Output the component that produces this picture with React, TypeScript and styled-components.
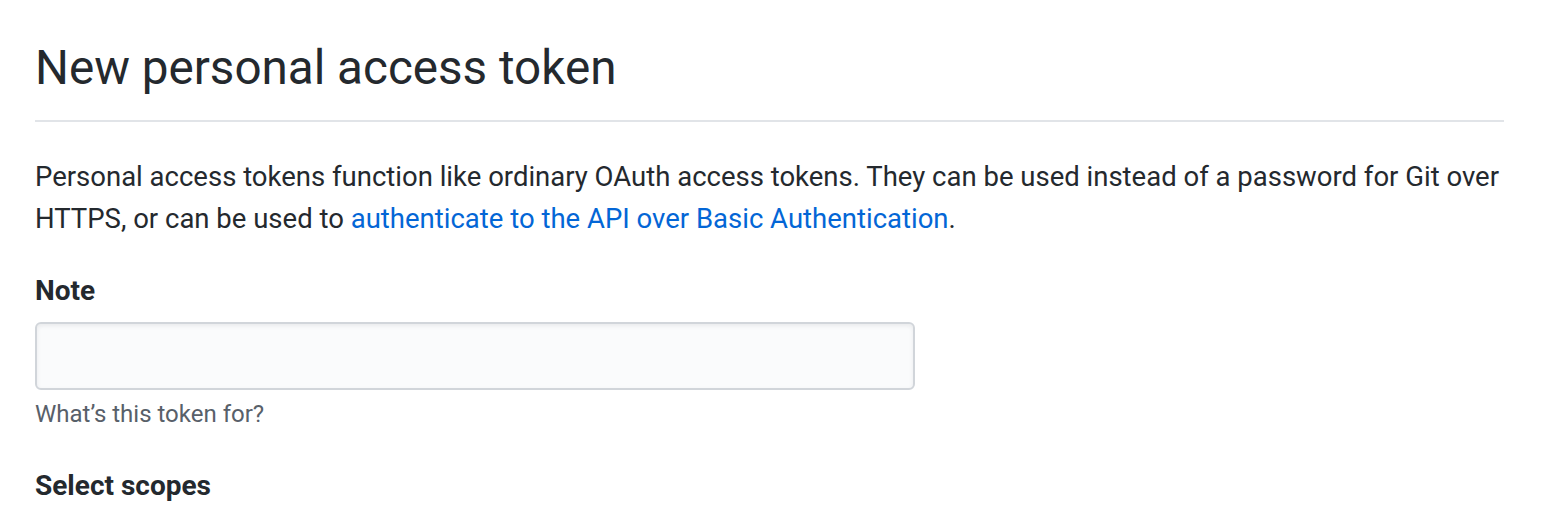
import React from 'react';
import styled, { createGlobalStyle } from 'styled-components';

const GlobalStyle = createGlobalStyle`
  body {
    margin: 0;
    background: #ffffff;
    color: #24292e;
    font-family: Roboto, "Liberation Sans", Arial, sans-serif;
  }
`;

const Page = styled.div`
  padding: 32px 60px 0 35px;
  width: 1469px;
`;

const Subhead = styled.div`
  padding-bottom: 16px;
  border-bottom: 2px solid #e1e4e8;
  margin-bottom: 34px;
`;

const Heading = styled.h2`
  margin: 0;
  font-size: 47.6px;
  font-weight: 400;
  line-height: 72px;
`;

const Description = styled.p`
  margin: 0 0 30px;
  font-size: 27.5px;
  line-height: 42px;
`;

const Link = styled.a`
  color: #0366d6;
  text-decoration: none;
`;

const FormGroup = styled.div`
  margin-bottom: 33px;
`;

const Label = styled.label`
  display: block;
  font-size: 28px;
  font-weight: 700;
  line-height: 42px;
  margin-bottom: 10px;
`;

const TextInput = styled.input`
  display: block;
  box-sizing: border-box;
  width: 880px;
  height: 68px;
  padding: 10px 16px;
  font-size: 28px;
  font-family: inherit;
  background: #fafbfc;
  border: 2px solid #d1d5da;
  border-radius: 6px;
  box-shadow: inset 0 2px 4px rgba(27, 31, 35, 0.075);
  outline: none;
`;

const Note = styled.p`
  margin: 6px 0 0;
  font-size: 24px;
  line-height: 36px;
  color: #586069;
`;

const SectionTitle = styled.div`
  font-size: 28px;
  font-weight: 700;
  line-height: 42px;
`;

export default function App() {
  return (
    <>
      <GlobalStyle />
      <Page>
        <Subhead>
          <Heading>New personal access token</Heading>
        </Subhead>
        <Description>
          Personal access tokens function like ordinary OAuth access tokens. They can be used instead of a password for Git over HTTPS, or can be used to{' '}
          <Link href="#">authenticate to the API over Basic Authentication</Link>.
        </Description>
        <FormGroup>
          <Label htmlFor="note">Note</Label>
          <TextInput id="note" type="text" />
          <Note>What’s this token for?</Note>
        </FormGroup>
        <SectionTitle>Select scopes</SectionTitle>
      </Page>
    </>
  );
}
